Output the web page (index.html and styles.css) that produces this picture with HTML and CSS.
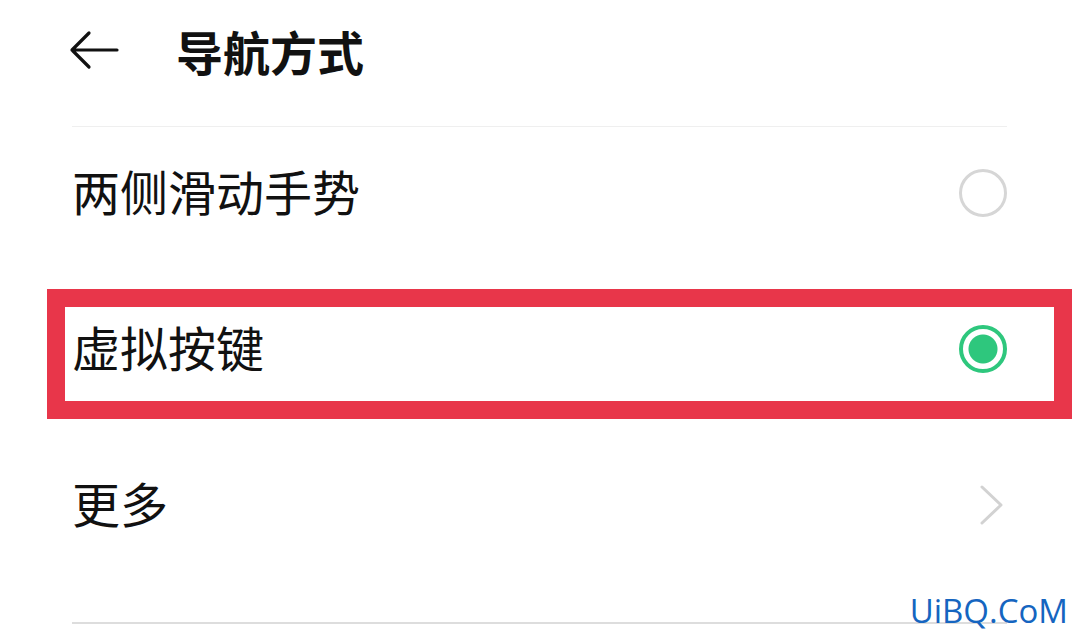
FILE: index.html
```html
<!DOCTYPE html>
<html lang="zh-CN">
<head>
    <meta charset="UTF-8">
    <meta name="viewport" content="width=device-width, initial-scale=1.0">
    <title>导航方式</title>
    <link rel="stylesheet" href="styles.css">
</head>
<body>
    <div class="page">
        <div class="header">
            <svg class="back" width="50" height="40" viewBox="0 0 50 40">
                <path d="M48 20 H3 M20 3 L3 20 L20 37" fill="none" stroke="#111" stroke-width="3.2" stroke-linecap="round" stroke-linejoin="round"/>
            </svg>
            <h1 class="title">导航方式</h1>
        </div>
        <div class="divider"></div>

        <div class="list">
            <div class="row row-first">
                <span class="label">两侧滑动手势</span>
                <span class="radio"></span>
            </div>
            <div class="row row-mid">
                <span class="label">虚拟按键</span>
                <span class="radio checked"></span>
                <div class="highlight"></div>
            </div>
            <div class="row row-last">
                <span class="label">更多</span>
                <svg class="chevron" width="26" height="42" viewBox="0 0 26 42">
                    <path d="M3 3 L22 21 L3 39" fill="none" stroke="#d2d2d2" stroke-width="3" stroke-linecap="round" stroke-linejoin="round"/>
                </svg>
            </div>
        </div>

        <div class="footer">
            <div class="divider bottom"></div>
            <span class="watermark">UiBQ.CoM</span>
        </div>
    </div>
</body>
</html>
```

FILE: styles.css
```css
body {
    margin: 0;
    background-color: #ffffff;
    color: #111111;
    font-family: "Noto Sans CJK SC", "Noto Sans", sans-serif;
}
.page {
    width: 1080px;
    height: 642px;
    overflow: hidden;
    position: relative;
}
.header {
    height: 126px;
    display: flex;
    align-items: center;
    padding-left: 69px;
    box-sizing: border-box;
    padding-bottom: 26px;
}
.back {
    display: block;
}
.title {
    margin: 0 0 0 57px;
    font-size: 47px;
    font-weight: 700;
    line-height: 1;
}
.divider {
    height: 1px;
    margin: 0 73px 0 72px;
    background-color: #efefef;
}
.list {
    display: flex;
    flex-direction: column;
}
.row {
    display: flex;
    align-items: center;
    justify-content: space-between;
    padding: 0 72px 0 72px;
    position: relative;
}
.row-first {
    height: 132px;
}
.row-mid {
    height: 180px;
}
.row-last {
    height: 132px;
}
.label {
    font-size: 48px;
    line-height: 1;
    margin-bottom: 7px;
}
.radio {
    width: 48px;
    height: 48px;
    border: 3px solid #d6d6d6;
    border-radius: 50%;
    box-sizing: border-box;
    margin-right: 1px;
}
.radio.checked {
    border: 4px solid #2ec77d;
    background: radial-gradient(circle, #2ec77d 0 14px, #ffffff 15px);
}
.chevron {
    display: block;
    margin-right: 3px;
}
.highlight {
    position: absolute;
    left: 47px;
    top: 30px;
    width: 1025px;
    height: 130px;
    border: 18px solid #e8364a;
    box-sizing: border-box;
    pointer-events: none;
}
.footer {
    margin-top: 51px;
    position: relative;
}
.divider.bottom {
    background-color: #dddddd;
    height: 2px;
}
.watermark {
    position: absolute;
    right: 12px;
    top: -28px;
    font-family: "Open Sans", "DejaVu Sans", sans-serif;
    font-size: 33px;
    line-height: 1;
    color: #1565c0;
}
```
